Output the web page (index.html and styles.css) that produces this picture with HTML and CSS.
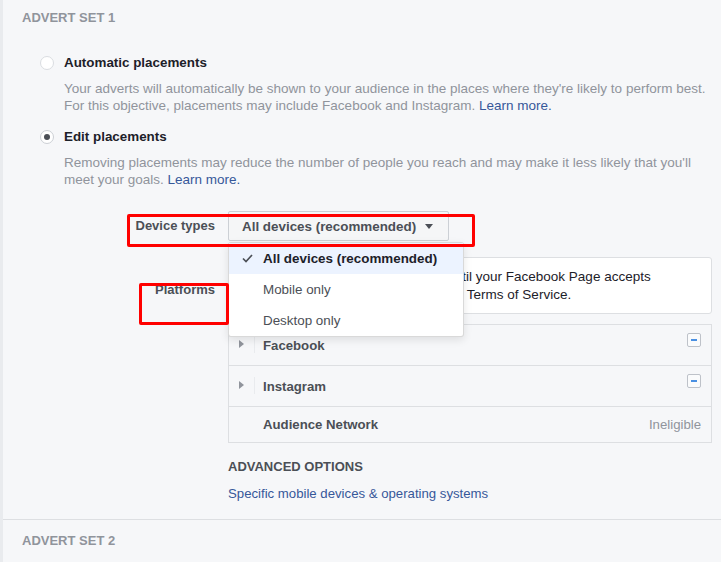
FILE: index.html
```html
<!DOCTYPE html>
<html lang="en">
<head>
    <meta charset="UTF-8">
    <meta name="viewport" content="width=device-width, initial-scale=1.0">
    <title>Placements</title>
    <link rel="stylesheet" href="styles.css">
</head>
<body>
    <div class="page">
        <section class="adset">
            <h3 class="adset-title">ADVERT SET 1</h3>
            <div class="placements">
                <div class="option">
                    <span class="radio"></span>
                    <span class="option-label">Automatic placements</span>
                </div>
                <p class="option-desc">Your adverts will automatically be shown to your audience in the places where they're likely to perform best.<br>For this objective, placements may include Facebook and Instagram. <a href="#">Learn more.</a></p>
                <div class="option">
                    <span class="radio checked"></span>
                    <span class="option-label">Edit placements</span>
                </div>
                <p class="option-desc">Removing placements may reduce the number of people you reach and may make it less likely that you'll<br>meet your goals. <a href="#">Learn more.</a></p>

                <div class="field-grid">
                    <div class="field-label">Device types</div>
                    <div class="field-control select-wrap">
                        <button class="select-button">All devices (recommended) <span class="caret"></span></button>
                        <ul class="select-menu">
                            <li class="selected">
                                <span class="check">
                                    <svg width="11" height="9" viewBox="0 0 11 9"><polyline points="1,4.5 4,7.5 10,1" fill="none" stroke="#4b4f56" stroke-width="1.7"/></svg>
                                </span>All devices (recommended)
                            </li>
                            <li><span class="check"></span>Mobile only</li>
                            <li><span class="check"></span>Desktop only</li>
                        </ul>
                    </div>

                    <div class="field-label platforms-label">Platforms</div>
                    <div class="field-control">
                        <div class="notice">
                            <p>Pending until your Facebook Page accepts<br>Instagram's Terms of Service.</p>
                        </div>
                        <div class="platform-list">
                            <div class="platform-row">
                                <span class="expander"><span class="arrow"></span></span>
                                <span class="platform-name">Facebook</span>
                                <span class="minus-button"></span>
                            </div>
                            <div class="platform-row">
                                <span class="expander"><span class="arrow"></span></span>
                                <span class="platform-name">Instagram</span>
                                <span class="minus-button"></span>
                            </div>
                            <div class="platform-row short">
                                <span class="platform-name">Audience Network</span>
                                <span class="status">Ineligible</span>
                            </div>
                        </div>
                    </div>

                    <div></div>
                    <div class="advanced">
                        <h4>ADVANCED OPTIONS</h4>
                        <a href="#">Specific mobile devices &amp; operating systems</a>
                    </div>
                </div>
            </div>
        </section>
        <section class="adset collapsed">
            <h3 class="adset-title">ADVERT SET 2</h3>
        </section>

        <!-- annotation boxes -->
        <div class="mark mark-devices"></div>
        <div class="mark mark-platforms"></div>
    </div>
</body>
</html>
```

FILE: styles.css
```css
body {
    margin: 0;
    background: #f6f7f9;
    font-family: "Liberation Sans", Arial, sans-serif;
    font-size: 13.4px;
    color: #1d2129;
}
a {
    color: #365899;
    text-decoration: none;
}
.page {
    position: relative;
    min-height: 100vh;
    border-left: 3px solid #e9ebee;
}
.adset {
    padding: 10px 9px 17px 19px;
    border-bottom: 1px solid #dddfe2;
}
.adset.collapsed {
    padding: 13px 9px 0 19px;
    border-bottom: none;
}
.adset-title {
    margin: 0;
    font-size: 13px;
    line-height: 16px;
    font-weight: bold;
    color: #90949c;
}
.placements {
    margin: 28px 0 0 18px;
}
.option {
    display: flex;
    align-items: center;
    gap: 10px;
    line-height: 18px;
}
.option-desc + .option {
    margin-top: 14px;
}
.radio {
    width: 14px;
    height: 14px;
    box-sizing: border-box;
    border: 1px solid #dadde1;
    border-radius: 50%;
    background: #fff;
    display: flex;
    align-items: center;
    justify-content: center;
}
.radio.checked {
    border-color: #ccd0d5;
}
.radio.checked:after {
    content: "";
    width: 6px;
    height: 6px;
    border-radius: 50%;
    background: #4b4f56;
}
.option-label {
    font-weight: bold;
    color: #1d2129;
}
.option-desc {
    margin: 8px 0 0 24px;
    font-size: 13.5px;
    line-height: 17px;
    color: #90949c;
}

/* form fields */
.field-grid {
    margin: 23px 0 0 24px;
    display: grid;
    grid-template-columns: 151px 1fr;
    column-gap: 13px;
    row-gap: 16px;
}
.field-label {
    text-align: right;
    font-size: 13px;
    font-weight: bold;
    color: #4b4f56;
    line-height: 30px;
}
.platforms-label {
    line-height: 16px;
    margin-top: 25px;
}
.select-wrap {
    position: relative;
}
.select-button {
    height: 30px;
    box-sizing: border-box;
    display: inline-flex;
    align-items: center;
    gap: 9px;
    padding: 0 15px 0 13px;
    border: 1px solid #ccd0d5;
    border-radius: 2px;
    background: #f5f6f7;
    font-family: inherit;
    font-size: 13.4px;
    font-weight: bold;
    color: #4b4f56;
}
.caret {
    width: 0;
    height: 0;
    border-left: 4px solid transparent;
    border-right: 4px solid transparent;
    border-top: 5px solid #4b4f56;
}
.select-menu {
    position: absolute;
    top: 31px;
    left: 0;
    z-index: 5;
    width: 236px;
    box-sizing: border-box;
    margin: 0;
    padding: 0;
    list-style: none;
    background: #fff;
    border: 1px solid rgba(0, 0, 0, 0.15);
    border-radius: 3px;
    box-shadow: 0 3px 8px rgba(0, 0, 0, 0.1);
}
.select-menu li {
    display: flex;
    align-items: center;
    height: 31px;
    padding-left: 13px;
    color: #4b4f56;
}
.select-menu li.selected {
    background: #ecf3ff;
    font-weight: bold;
    color: #1d2129;
}
.check {
    width: 21px;
    display: flex;
}

.notice {
    background: #fff;
    border: 1px solid #dddfe2;
    border-radius: 3px;
    padding: 10px 12px 9px 165px;
}
.notice p {
    margin: 0;
    font-size: 13.5px;
    line-height: 18px;
    color: #1d2129;
}
.platform-list {
    margin-top: 10px;
    border: 1px solid #dddfe2;
    font-size: 13.2px;
}
.platform-row {
    display: flex;
    align-items: center;
    height: 40px;
    padding-right: 10px;
}
.platform-row + .platform-row {
    border-top: 1px solid #dddfe2;
}
.platform-row.short {
    height: 35px;
    padding-left: 34px;
}
.expander {
    width: 26px;
    height: 17px;
    border-right: 1px solid #e9ebee;
    display: flex;
    align-items: center;
    padding-left: 10px;
    box-sizing: border-box;
    margin-top: -2px;
}
.arrow {
    width: 0;
    height: 0;
    border-left: 5px solid #90949c;
    border-top: 4px solid transparent;
    border-bottom: 4px solid transparent;
}
.platform-name {
    flex: 1;
    padding-left: 8px;
    font-weight: bold;
    color: #4b4f56;
}
.short .platform-name {
    padding-left: 0;
}
.minus-button {
    align-self: flex-start;
    margin-top: 8px;
    width: 14px;
    height: 14px;
    box-sizing: border-box;
    border: 1px solid #bec2c9;
    border-radius: 2px;
    background: #fafbfc;
    display: flex;
    align-items: center;
    justify-content: center;
}
.minus-button:after {
    content: "";
    width: 6px;
    height: 2px;
    background: #4a90e2;
}
.status {
    color: #90949c;
}
.advanced h4 {
    margin: 0;
    font-size: 13px;
    line-height: 16px;
    font-weight: bold;
    color: #4b4f56;
}
.advanced a {
    display: block;
    margin-top: 11px;
    font-size: 13.2px;
    line-height: 16px;
}

/* red annotation boxes */
.mark {
    position: absolute;
    z-index: 10;
    border: 3px solid #ff0000;
    border-radius: 2px;
    box-sizing: border-box;
}
.mark-devices {
    left: 124px;
    top: 214px;
    width: 348px;
    height: 33px;
}
.mark-platforms {
    left: 136px;
    top: 283px;
    width: 90px;
    height: 42px;
}
```
